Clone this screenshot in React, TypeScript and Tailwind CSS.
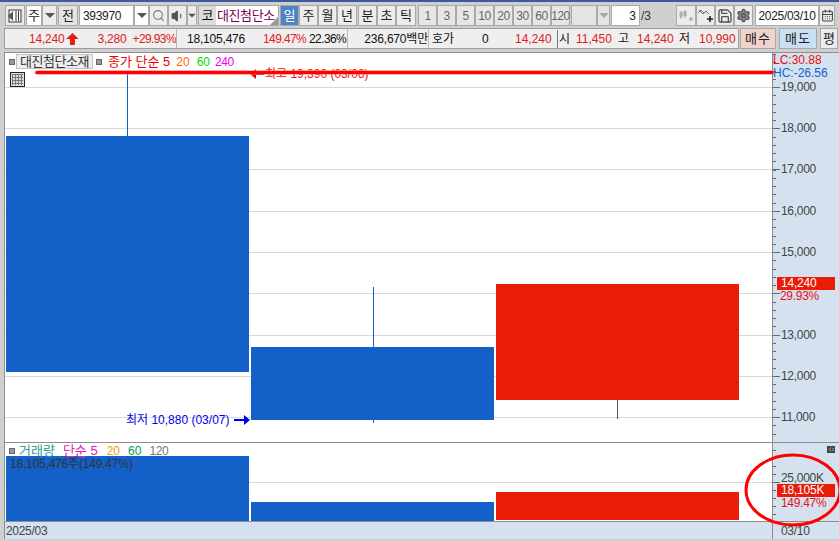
import { Search, Save, Settings, Volume1, CalendarDays, ChevronsLeftRight } from "lucide-react"
import { twMerge } from "tailwind-merge"

const FONT = "font-['Liberation_Sans','Noto_Sans_CJK_KR',sans-serif]"

const gridY = [87, 128, 169, 211, 252, 293, 335, 376, 417]
const priceLabels = [
  { y: 87, t: "19,000" },
  { y: 128, t: "18,000" },
  { y: 169, t: "17,000" },
  { y: 211, t: "16,000" },
  { y: 252, t: "15,000" },
  { y: 335, t: "13,000" },
  { y: 376, t: "12,000" },
  { y: 417, t: "11,000" },
]

function Btn({ w, children, className = "" }: { w: string; children?: React.ReactNode; className?: string }) {
  return (
    <div className={twMerge("h-[21px] shrink-0 flex items-center justify-center border border-[#a9a9a9] bg-[#ececec] text-[13px] text-[#222]", w, className)}>
      {children}
    </div>
  )
}

function Caret({ className = "border-t-[#555]" }: { className?: string }) {
  return <div className={`w-0 h-0 border-x-[5px] border-x-transparent border-t-[5px] ${className}`} />
}

function Toolbar() {
  return (
    <div className="flex items-center h-[21px] mt-[5px] pl-[5px]">
      <Btn w="w-[20px]" className="mr-[1px]">
        <svg width="14" height="14" viewBox="0 0 14 14">
          <rect x="1" y="1" width="12" height="12" fill="#fff" stroke="#333" />
          <path d="M0 7l5-5v10z" fill="#555" />
          <path d="M8 2v10M10.5 2v10" stroke="#333" />
        </svg>
      </Btn>
      <Btn w="w-[16px]" className="bg-white">주</Btn>
      <Btn w="w-[15px]" className="mr-[1px]"><Caret /></Btn>
      <Btn w="w-[20px]" className="mr-[1px] bg-[#e4e4e4]">전</Btn>
      <Btn w="w-[55px]" className="bg-white justify-start pl-[3px] tracking-[-0.3px] text-[12px]">393970</Btn>
      <Btn w="w-[15px]" className="bg-white"><Caret /></Btn>
      <Btn w="w-[19px]"><Search size={13} className="text-[#777]" /></Btn>
      <Btn w="w-[19px]"><Volume1 size={14} className="text-[#555] fill-[#555]" /></Btn>
      <Btn w="w-[10px]" className="mr-[1px]"><Caret className="border-t-[#555] scale-75" /></Btn>
      <div className="w-[81px] h-[21px] shrink-0 flex items-center border border-[#a9a9a9] bg-white mr-[1px] relative overflow-hidden">
        <div className="w-[17px] h-full flex items-center justify-center bg-[#dcdcdc] text-[13px] text-[#111]">코</div>
        <div className="pl-[1px] text-[13px] text-[#7a0050] whitespace-nowrap tracking-[-0.4px]">대진첨단소</div>
        <div className="absolute right-0 bottom-0 w-0 h-0 border-l-[8px] border-l-transparent border-b-[8px] border-b-[#999]" />
      </div>
      <Btn w="w-[19px]" className="bg-[#4d84c4] text-white">일</Btn>
      <Btn w="w-[19px]">주</Btn>
      <Btn w="w-[19px]">월</Btn>
      <Btn w="w-[20px]" className="mr-[1px]">년</Btn>
      <Btn w="w-[19px]">분</Btn>
      <Btn w="w-[19px]">초</Btn>
      <Btn w="w-[20px]" className="mr-[2px]">틱</Btn>
      {["1", "3", "5", "10", "20", "30", "60", "120"].map((n) => (
        <Btn key={n} w="w-[19px]" className="text-[12px] tracking-[-0.5px] text-[#666] bg-[#e6e6e6]">{n}</Btn>
      ))}
      <Btn w="w-[26px]" className="ml-[1px] bg-[#e4e4e4]" />
      <Btn w="w-[13px]" className="mr-[1px] bg-[#e4e4e4]"><Caret className="border-t-[#aaa]" /></Btn>
      <Btn w="w-[29px]" className="bg-white justify-end pr-[3px] text-[12px]">3</Btn>
      <div className="w-[36px] shrink-0 pl-[1px] text-[12px] text-[#333]">/3</div>
      <Btn w="w-[20px]">
        <svg width="16" height="14" viewBox="0 0 16 14">
          <path d="M3 2v8M7 1v8M3 3h0" stroke="#aaa" />
          <rect x="1.5" y="3" width="3" height="5" fill="#aaa" />
          <rect x="5.5" y="2" width="3" height="5" fill="#aaa" />
          <path d="M11 10h4M13 8v4" stroke="#aaa" strokeWidth="1.5" />
        </svg>
      </Btn>
      <Btn w="w-[19px]">
        <svg width="17" height="15" viewBox="0 0 17 15">
          <path d="M1 5l3-3 3 3 3-2M2 2l4 4 3-3 3 3" stroke="#777" fill="none" />
          <path d="M10 11h6M13 8v6" stroke="#222" strokeWidth="1.6" />
        </svg>
      </Btn>
      <Btn w="w-[19px]"><Save size={16} className="text-[#555]" /></Btn>
      <Btn w="w-[19px]" className="mr-[2px]"><Settings size={15} className="text-[#555] fill-[#888]" /></Btn>
      <Btn w="w-[64px]" className="bg-white text-[12px] tracking-[-0.3px] text-[#222]">2025/03/10</Btn>
      <Btn w="w-[16px]"><CalendarDays size={13} className="text-[#444]" /></Btn>
    </div>
  )
}

function InfoBar() {
  const red = "text-[#e0201a]"
  return (
    <div className="flex items-center h-[21px] mt-[2px] pl-[4px] text-[12px]">
      <div className="w-[735px] h-[21px] shrink-0 flex items-center border border-[#9c9c9c] bg-[#efefef] whitespace-nowrap relative">
        <div className={`w-[172px] flex items-center border-r border-[#bbb] h-full ${red}`}>
          <span className="ml-[24px] w-[36px] tracking-[-0.2px]">14,240</span>
          <svg width="13" height="12" viewBox="0 0 13 12" className="ml-[1px]"><path d="M6.5 0L13 6H9v6H4V6H0z" fill="#e0201a" /></svg>
          <span className="ml-[19px] tracking-[-0.2px]">3,280</span>
          <span className="ml-[6px] tracking-[-0.6px]">+29.93%</span>
        </div>
        <div className="w-[171px] flex items-center border-r border-[#bbb] h-full">
          <span className="ml-[10px] w-[76px] text-[#111] tracking-[-0.2px]">18,105,476</span>
          <span className={`w-[46px] ${red} tracking-[-0.6px]`}>149.47%</span>
          <span className="text-[#111] tracking-[-0.6px]">22.36%</span>
        </div>
        <div className="w-[81px] flex items-center justify-end border-r border-[#bbb] h-full text-[#111] overflow-hidden">
          <span className="tracking-[-0.2px]">236,670백만</span>
        </div>
        <span className="ml-[3px] w-[50px] text-[#111]">호가</span>
        <span className="w-[20px] text-[#111]">0</span>
        <span className={`ml-[13px] w-[36px] ${red}`}>14,240</span>
        <span className="ml-[6px] w-[19px] border-l border-[#777] pl-[1px] text-[#111]">시</span>
        <span className={`w-[42px] ${red}`}>11,450</span>
        <span className="w-[19px] text-[#111]">고</span>
        <span className={`w-[42px] ${red}`}>14,240</span>
        <span className="w-[20px] text-[#111]">저</span>
        <span className={`${red}`}>10,990</span>
      </div>
      <div className="w-[36px] h-[21px] shrink-0 ml-[1px] flex items-center justify-center border border-[#a9a9a9] bg-[#f2d2cc] text-[13px] tracking-[1px] text-[#222]">매수</div>
      <div className="w-[38px] h-[21px] shrink-0 ml-[3px] flex items-center justify-center border border-[#a9a9a9] bg-[#c9dff3] text-[13px] tracking-[1px] text-[#222]">매도</div>
      <div className="w-[18px] h-[21px] shrink-0 ml-[3px] flex items-center justify-center border border-[#a9a9a9] bg-[#ececec] text-[13px] text-[#222]">평</div>
    </div>
  )
}

function PriceChart() {
  const ticks: number[] = []
  for (let y = 54; y < 442; y += 8.25) ticks.push(Math.round(y))
  return (
    <svg width="834" height="390" viewBox="0 53 834 390" className="block absolute left-0 top-0">
      {gridY.map((y) => (
        <line key={y} x1="0" x2="767" y1={y + 0.5} y2={y + 0.5} stroke="#d9d9d9" />
      ))}
      <line x1="122.5" x2="122.5" y1="72" y2="136" stroke="#1360c9" />
      <rect x="1" y="136" width="243" height="236" fill="#1360c9" />
      <line x1="368.5" x2="368.5" y1="287" y2="423" stroke="#1360c9" />
      <rect x="246" y="347" width="243" height="73" fill="#1360c9" />
      <line x1="612.5" x2="612.5" y1="400" y2="419" stroke="#555" />
      <rect x="491" y="284" width="243" height="116" fill="#ea1c08" />
      {ticks.map((y) => (
        <line key={y} x1="768" x2="771" y1={y + 0.5} y2={y + 0.5} stroke="#666" />
      ))}
      {gridY.map((y) => (
        <line key={y} x1="768" x2="775" y1={y + 0.5} y2={y + 0.5} stroke="#666" />
      ))}
    </svg>
  )
}

function VolumeChart() {
  return (
    <svg width="834" height="78" viewBox="0 443 834 78" className="block absolute left-0 top-0">
      <line x1="0" x2="767" y1="482.5" y2="482.5" stroke="#d9d9d9" />
      <rect x="1" y="456" width="243" height="65" fill="#1360c9" />
      <rect x="246" y="502" width="243" height="19" fill="#1360c9" />
      <rect x="491" y="492" width="243" height="28" fill="#ea1c08" />
      {[450, 458, 466, 474, 490, 498, 506, 514].map((y) => (
        <line key={y} x1="768" x2="771" y1={y + 0.5} y2={y + 0.5} stroke="#666" />
      ))}
      <line x1="768" x2="775" y1="482.5" y2="482.5" stroke="#666" />
    </svg>
  )
}

const axisText = "text-[12px] leading-[14px] tracking-[-0.3px] text-[#444] whitespace-nowrap"

export default function App() {
  return (
    <div className={`${FONT} relative w-[839px] h-[541px] overflow-hidden bg-[#cfcfcf] border-t-2 border-[#3b5b9e]`}>
      <div className="-mt-[2px]">
        <Toolbar />
        <InfoBar />
      </div>

      <div className="mt-[3px] ml-[4px] w-[835px] border-t border-l border-[#8e8e8e]">
        {/* price panel */}
        <div className="relative h-[389px] flex">
          <div className="w-[768px] h-full bg-white border-r border-[#8e8e8e] shrink-0" />
          <div className="flex-1 h-full bg-[#d5e1ef]" />
          <PriceChart />
          <div className="absolute left-[3px] top-[1px] flex items-center text-[13px] leading-[14px] whitespace-nowrap">
            <div className="w-[6px] h-[6px] bg-[#999] border border-[#666] mr-[1px] ml-[1px]" />
            <div className="h-[15px] w-[77px] flex items-center justify-center bg-[#eeeeee] border border-[#c4c4c4] text-[#333] tracking-[-0.5px]">대진첨단소재</div>
            <div className="w-[6px] h-[6px] bg-[#999] border border-[#666] mx-[3px]" />
            <span className="text-[#f00000] ml-[3px] mr-[6px]">종가 단순 5</span>
            <span className="text-[12px] text-[#ff6a00] mr-[7px]">20</span>
            <span className="text-[12px] text-[#00e000] mr-[5px]">60</span>
            <span className="text-[12px] text-[#f000f0] tracking-[-0.4px]">240</span>
          </div>
          <div className="absolute left-[5px] top-[19px] w-[15px] h-[15px] bg-[#ddd] border border-[#222] flex items-center justify-center">
            <svg width="11" height="11" viewBox="0 0 11 11"><path d="M0 .5h11M0 3.5h11M0 6.5h11M0 9.5h11M.5 0v11M3.5 0v11M6.5 0v11M9.5 0v11" stroke="#777" /></svg>
          </div>
          <div className="absolute left-[245px] top-[14px] flex items-center text-[12px] leading-[14px] text-[#ee1111] whitespace-nowrap">
            <svg width="14" height="10" viewBox="0 0 14 10" className="mr-[1px]"><path d="M0 5l6-5v4h8v2H6v4z" fill="#e00" /></svg>
            최고 19,390 (03/06)
          </div>
          <div className="absolute left-[121px] top-[360px] flex items-center text-[12px] leading-[14px] text-[#0000f0] whitespace-nowrap">
            최저 10,880 (03/07)
            <svg width="16" height="10" viewBox="0 0 16 10" className="ml-[5px]"><path d="M16 5l-6-5v4H0v2h10v4z" fill="#00e" /></svg>
          </div>
          {/* right axis */}
          <div className="absolute left-[768px] top-0 text-[12px] leading-[13px] whitespace-nowrap">
            <div className="text-[#e81010] mt-[1px]">LC:30.88</div>
            <div className="text-[#1360c9]">HC:-26.56</div>
          </div>
          {priceLabels.map((l) => (
            <div key={l.t} className={`absolute left-[776px] ${axisText}`} style={{ top: l.y - 53 - 7 }}>{l.t}</div>
          ))}
          <div className="absolute left-[772px] top-[224px] w-[58px] h-[13px] bg-[#ea1c08] text-white text-[12px] leading-[13px] pl-[4px] tracking-[-0.2px]">14,240</div>
          <div className="absolute left-[775px] top-[238px] text-[#e81010] text-[12px] leading-[11px] tracking-[-0.3px]">29.93%</div>
        </div>

        {/* volume panel */}
        <div className="relative h-[79px] flex border-t border-[#8e8e8e]">
          <div className="w-[768px] h-full bg-white border-r border-[#8e8e8e] shrink-0" />
          <div className="flex-1 h-full bg-[#d5e1ef]" />
          <VolumeChart />
          <div className="absolute left-[4px] top-[1px] flex items-center text-[13px] leading-[14px] whitespace-nowrap">
            <div className="w-[6px] h-[6px] bg-[#999] border border-[#666] mr-[4px]" />
            <span className="text-[#2a9d8f] mr-[8px]">거래량</span>
            <span className="text-[#e020b0] mr-[9px]">단순 5</span>
            <span className="text-[12px] text-[#f0a000] mr-[8px]">20</span>
            <span className="text-[12px] text-[#00a050] mr-[8px]">60</span>
            <span className="text-[12px] text-[#777] tracking-[-0.4px]">120</span>
          </div>
          <div className="absolute left-[5px] top-[14px] text-[12px] leading-[14px] text-[#333] tracking-[-0.2px] whitespace-nowrap">18,105,476주(149.47%)</div>
          <div className="absolute left-[822px] top-[3px] w-[8px] h-[7px] bg-[#444] flex items-center justify-center">
            <ChevronsLeftRight size={7} className="text-white" />
          </div>
          <div className="absolute left-[776px] top-[30px] text-[12px] leading-[10px] tracking-[-0.3px] text-[#444] whitespace-nowrap">25,000K</div>
          <div className="absolute left-[772px] top-[41px] w-[58px] h-[13px] bg-[#ea1c08] text-white text-[12px] leading-[13px] pl-[4px] tracking-[-0.2px]">18,105K</div>
          <div className="absolute left-[776px] top-[55px] text-[#e81010] text-[12px] leading-[11px] tracking-[-0.3px]">149.47%</div>
        </div>

        {/* date axis */}
        <div className="flex h-[18px] border-t border-[#8e8e8e] bg-[#d5e1ef] text-[12px] leading-[18px] text-[#444] tracking-[-0.3px]">
          <div className="w-[768px] border-r border-[#8e8e8e] pl-[1px]">2025/03</div>
          <div className="pl-[8px]">03/10</div>
        </div>
      </div>

      {/* hand-drawn marks over the chart */}
      <svg width="839" height="541" viewBox="0 2 839 541" className="absolute left-0 top-0 pointer-events-none">
        <line x1="37" x2="772" y1="72.5" y2="72.5" stroke="#f66" strokeOpacity="0.5" strokeWidth="5" strokeLinecap="round" />
        <line x1="37" x2="772" y1="72.5" y2="72.5" stroke="#f00" strokeWidth="3" strokeLinecap="round" />
        <ellipse cx="793" cy="490" rx="47" ry="35" fill="none" stroke="#f00" strokeWidth="3" />
      </svg>
    </div>
  )
}
